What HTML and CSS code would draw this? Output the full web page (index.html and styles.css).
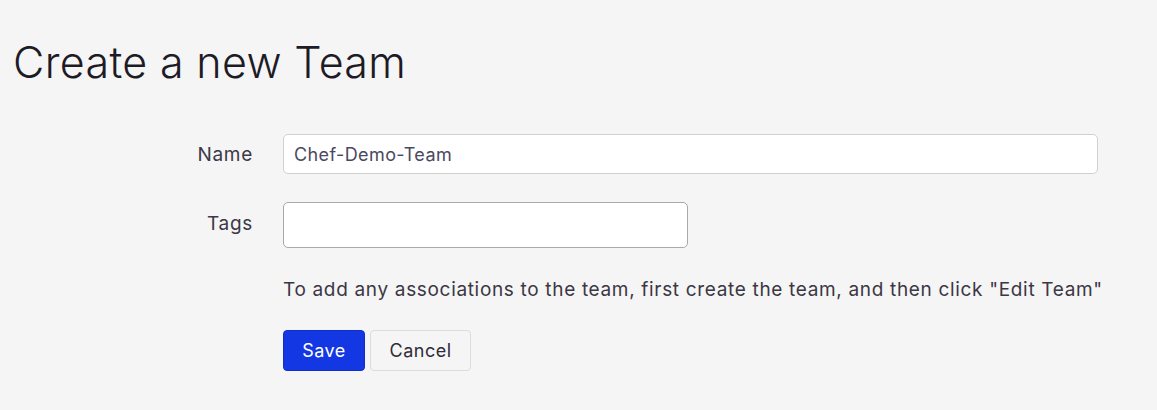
FILE: index.html
```html
<!DOCTYPE html>
<html>
<head>
<meta charset="utf-8">
<link rel="stylesheet" href="styles.css">
</head>
<body>
<div class="page">
  <h1 class="title">Create a new Team</h1>
  <form class="form">
    <label class="label" for="name">Name</label>
    <div class="field"><input id="name" class="input input-name" type="text" value="Chef-Demo-Team"></div>
    <label class="label label-tags" for="tags">Tags</label>
    <div class="field"><input id="tags" class="input input-tags" type="text"></div>
    <div></div>
    <p class="hint">To add any associations to the team, first create the team, and then click "Edit Team"</p>
    <div></div>
    <div class="actions">
      <button type="button" class="btn btn-primary">Save</button>
      <button type="button" class="btn btn-default">Cancel</button>
    </div>
  </form>
</div>
</body>
</html>
```

FILE: styles.css
```css
html, body {
  margin: 0;
  padding: 0;
  background: #f5f5f5;
}
body {
  font-family: "Inter", "Liberation Sans", sans-serif;
  color: #2b2a35;
  width: 1157px;
  height: 410px;
  overflow: hidden;
}
.page {
  padding: 30px 0 0 13px;
}
.title {
  margin: 0;
  font-size: 43px;
  font-weight: 300;
  line-height: 64px;
  color: #1d1b26;
  letter-spacing: 0.35px;
}
.form {
  display: grid;
  grid-template-columns: 240px 815px;
  column-gap: 30px;
  margin-top: 40px;
  align-items: center;
}
.label {
  text-align: right;
  font-size: 19px;
  letter-spacing: 0.7px;
  color: #3a3946;
}
.field {
  display: flex;
}
.input {
  box-sizing: border-box;
  font-family: inherit;
  font-size: 18px;
  letter-spacing: 0.4px;
  color: #4a4960;
  background: #fff;
  border-radius: 5px;
  padding: 0 10px;
  outline: none;
}
.input-name {
  width: 815px;
  height: 40px;
  border: 1px solid #d0d0d0;
}
.input-tags {
  width: 405px;
  height: 46px;
  border: 1px solid #a9a9a9;
  margin-top: 28px;
}
.label-tags {
  margin-top: 28px;
  align-self: start;
  padding-top: 10px;
}
.hint {
  margin: 29px 0 0;
  font-size: 19px;
  letter-spacing: 0.67px;
  line-height: 26px;
  white-space: nowrap;
  color: #3b3744;
}
.actions {
  display: flex;
  gap: 5px;
  margin-top: 27px;
}
.btn {
  box-sizing: border-box;
  height: 41px;
  font-family: inherit;
  font-size: 18px;
  letter-spacing: 0.5px;
  border-radius: 4px;
  padding: 0;
  cursor: pointer;
}
.btn-primary {
  width: 82px;
  background: #1437e4;
  border: 1px solid #0f2fc8;
  color: #fff;
}
.btn-default {
  width: 101px;
  background: #f5f5f5;
  border: 1px solid #dcdcdc;
  color: #2e2c3a;
}
```
